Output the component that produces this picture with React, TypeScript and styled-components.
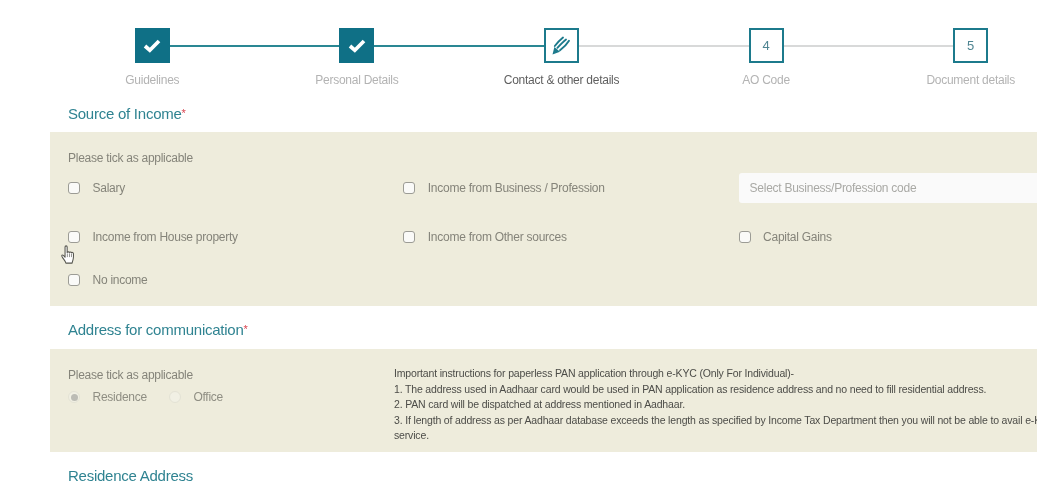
import React, { FC } from "react";
import styled, { createGlobalStyle } from "styled-components";

const GlobalStyle = createGlobalStyle`
  html, body {
    margin: 0;
    height: 100%;
    background: #fff;
    overflow: hidden;
  }
  body {
    font-family: "Liberation Sans", Arial, sans-serif;
    font-size: 12px;
    letter-spacing: -0.26px;
  }
`;

const Page = styled.div`
  width: 1037px;
  height: 487px;
  overflow: hidden;
  position: relative;
  padding: 28px 0 0 50px;
  box-sizing: border-box;
  filter: blur(0.4px);
`;

const Stepper = styled.div`
  display: grid;
  grid-template-columns: repeat(5, 204.6px);
  width: 1023px;
`;

const Step = styled.div`
  display: flex;
  flex-direction: column;
  align-items: center;
`;

const StepHead = styled.div`
  display: flex;
  align-items: center;
  width: 100%;
  height: 35px;
`;

const Line = styled.div<{ $state: "done" | "todo" | "none" }>`
  flex: 1;
  height: 2px;
  background: ${(p) =>
    p.$state === "done" ? "#2a8793" : p.$state === "todo" ? "#d8d9d9" : "transparent"};
`;

const StepBox = styled.div<{ $filled?: boolean }>`
  width: 35px;
  height: 35px;
  box-sizing: border-box;
  display: flex;
  align-items: center;
  justify-content: center;
  flex-shrink: 0;
  background: ${(p) => (p.$filled ? "#0f7086" : "#fff")};
  border: ${(p) => (p.$filled ? "none" : "2.5px solid #1c7a8c")};
  color: #4f8592;
  font-size: 13px;
  letter-spacing: 0;
`;

const StepLabel = styled.div<{ $active?: boolean }>`
  margin-top: 10px;
  line-height: 14px;
  white-space: nowrap;
  color: ${(p) => (p.$active ? "#5f5f5f" : "#b3b3b3")};
`;

const Heading = styled.h2`
  margin: 0;
  padding-left: 18px;
  font-size: 15px;
  font-weight: 400;
  line-height: 18px;
  letter-spacing: -0.25px;
  color: #2f8391;
  sup {
    color: #d9434f;
    font-size: 11px;
    line-height: 0;
    vertical-align: 2px;
  }
`;

const SourceHeading = styled(Heading)`
  margin-top: 18px;
`;

const AddressHeading = styled(Heading)`
  margin-top: 15px;
`;

const ResidenceHeading = styled(Heading)`
  margin-top: 15px;
`;

const Panel = styled.div`
  width: 1100px;
  box-sizing: border-box;
  margin-top: 9px;
  padding-left: 18px;
  background: #eeecdc;
`;

const IncomePanel = styled(Panel)`
  height: 174px;
  padding-top: 19px;
`;

const AddressPanel = styled(Panel)`
  height: 103px;
  margin-top: 10px;
  padding-top: 19px;
  display: flex;
`;

const Hint = styled.div`
  line-height: 14px;
  color: #85847a;
`;

const IncomeGrid = styled.div`
  display: grid;
  grid-template-columns: repeat(3, 335.3px);
  grid-template-rows: 30px 30px 30px;
  margin-top: 8px;
  & > :nth-child(n + 4) {
    margin-top: 19px;
  }
  & > :nth-child(n + 7) {
    margin-top: 32px;
  }
`;

const Option = styled.label`
  display: flex;
  align-items: center;
  height: 30px;
  color: #85847a;
  white-space: nowrap;
`;

const CheckBox = styled.span`
  width: 12px;
  height: 12px;
  box-sizing: border-box;
  flex-shrink: 0;
  margin-right: 12.5px;
  background: #fafaf8;
  border: 1px solid #9c9c95;
  border-radius: 3px;
`;

const CodeSelect = styled.div`
  width: 320px;
  height: 30px;
  box-sizing: border-box;
  padding-left: 11px;
  display: flex;
  align-items: center;
  background: #fafafa;
  border-radius: 3px;
  color: #a9a9a5;
`;

const AddressLeft = styled.div`
  width: 326px;
  flex-shrink: 0;
`;

const RadioRow = styled.div`
  display: flex;
  align-items: center;
  height: 16px;
  margin-top: 7px;
  color: #8f8e83;
`;

const Radio = styled.span<{ $checked?: boolean }>`
  width: 12px;
  height: 12px;
  box-sizing: border-box;
  flex-shrink: 0;
  margin-right: 12.5px;
  border-radius: 50%;
  display: flex;
  align-items: center;
  justify-content: center;
  background: #f1f0e4;
  border: 1px solid #e3e2d5;
  &::after {
    content: "";
    width: 7px;
    height: 7px;
    border-radius: 50%;
    background: ${(p) => (p.$checked ? "#bcbcb5" : "transparent")};
  }
`;

const RadioText = styled.span`
  margin-right: 22px;
`;

const Notes = styled.div`
  flex-shrink: 0;
  white-space: nowrap;
  font-size: 10.5px;
  letter-spacing: -0.16px;
  line-height: 15.5px;
  color: #4c4c48;
  margin-top: -2px;
`;

const CursorWrap = styled.div`
  position: absolute;
  left: 60px;
  top: 245px;
  width: 16px;
  height: 20px;
`;

const TickIcon: FC = () => (
  <svg width="18" height="15" viewBox="0 0 18 15" fill="none">
    <path d="M2 8 L6.8 12.2 L16 3" stroke="#fff" strokeWidth="3.7" />
  </svg>
);

const PenIcon: FC = () => (
  <svg width="20" height="20" viewBox="0 0 20 20" fill="none">
    <path d="M1.5 18.5 L3.4 11 L9 15.8 Z" fill="#1c7a8c" />
    <path
      d="M3.8 10 C6.5 6.5 9.5 3.5 12 1.5 M6.4 11.8 C9.5 8.5 12.5 5.5 15 3.5 M9 14.2 C12 12 15.5 9 18 4.8"
      stroke="#1c7a8c"
      strokeWidth="1.9"
      strokeLinecap="round"
    />
  </svg>
);

const HandCursor: FC = () => (
  <svg width="16" height="20" viewBox="0 0 14 19">
    <path
      d="M4.2 1.8c0-1.3 2-1.3 2 0v5.4c.2-1 1.9-1 2 .1.2-.9 1.8-.9 2 .2.3-.8 1.8-.6 1.9.4.2 2.2.2 4.5-.4 6.4-.3 1-.6 1.7-.8 2.9H5c-.4-1.7-1.6-3-3-5-.7-1-1.3-2-.7-2.5.7-.6 1.7.3 2.9 1.9V1.8z"
      fill="#fff"
      stroke="#55554e"
      strokeWidth="1"
      strokeLinejoin="round"
    />
    <path d="M6.4 8v3.5M8.4 8v3.5M10.3 8.4v3.1" stroke="#55554e" strokeWidth="0.6" />
  </svg>
);

interface IStep {
  label: string;
  content: React.ReactNode;
  filled?: boolean;
  active?: boolean;
  before: "done" | "todo" | "none";
  after: "done" | "todo" | "none";
}

const steps: IStep[] = [
  { label: "Guidelines", content: <TickIcon />, filled: true, before: "none", after: "done" },
  { label: "Personal Details", content: <TickIcon />, filled: true, before: "done", after: "done" },
  { label: "Contact & other details", content: <PenIcon />, active: true, before: "done", after: "todo" },
  { label: "AO Code", content: "4", before: "todo", after: "todo" },
  { label: "Document details", content: "5", before: "todo", after: "none" },
];

const Check: FC<{ label: string }> = ({ label }) => (
  <Option>
    <CheckBox />
    {label}
  </Option>
);

const App: FC = () => {
  return (
    <Page>
      <GlobalStyle />
      <Stepper>
        {steps.map((s) => (
          <Step key={s.label}>
            <StepHead>
              <Line $state={s.before} />
              <StepBox $filled={s.filled}>{s.content}</StepBox>
              <Line $state={s.after} />
            </StepHead>
            <StepLabel $active={s.active}>{s.label}</StepLabel>
          </Step>
        ))}
      </Stepper>

      <SourceHeading>
        Source of Income<sup>*</sup>
      </SourceHeading>
      <IncomePanel>
        <Hint>Please tick as applicable</Hint>
        <IncomeGrid>
          <Check label="Salary" />
          <Check label="Income from Business / Profession" />
          <CodeSelect>Select Business/Profession code</CodeSelect>
          <Check label="Income from House property" />
          <Check label="Income from Other sources" />
          <Check label="Capital Gains" />
          <Check label="No income" />
        </IncomeGrid>
      </IncomePanel>

      <AddressHeading>
        Address for communication<sup>*</sup>
      </AddressHeading>
      <AddressPanel>
        <AddressLeft>
          <Hint>Please tick as applicable</Hint>
          <RadioRow>
            <Radio $checked />
            <RadioText>Residence</RadioText>
            <Radio />
            <RadioText>Office</RadioText>
          </RadioRow>
        </AddressLeft>
        <Notes>
          Important instructions for paperless PAN application through e-KYC (Only For Individual)-
          <br />
          1. The address used in Aadhaar card would be used in PAN application as residence address and no need to fill residential address.
          <br />
          2. PAN card will be dispatched at address mentioned in Aadhaar.
          <br />
          3. If length of address as per Aadhaar database exceeds the length as specified by Income Tax Department then you will not be able to avail e-KYC
          <br />
          service.
        </Notes>
      </AddressPanel>

      <ResidenceHeading>Residence Address</ResidenceHeading>

      <CursorWrap>
        <HandCursor />
      </CursorWrap>
    </Page>
  );
};

export default App;
